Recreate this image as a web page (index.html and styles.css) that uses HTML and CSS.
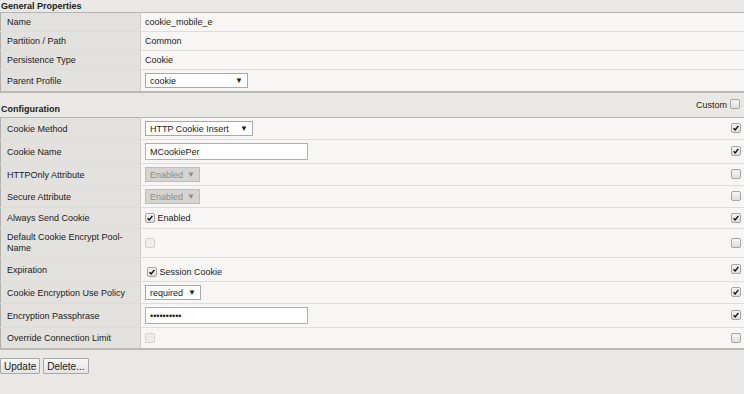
FILE: index.html
```html
<!DOCTYPE html>
<html>
<head>
<title>Cookie Persistence Profile</title>
<link rel="stylesheet" href="styles.css">
</head>
<body>
<div class="page">
  <h3 class="section">General Properties</h3>
  <table class="props">
    <tr>
      <td class="label">Name</td>
      <td class="value" colspan="2">cookie_mobile_e</td>
    </tr>
    <tr>
      <td class="label">Partition / Path</td>
      <td class="value" colspan="2">Common</td>
    </tr>
    <tr>
      <td class="label">Persistence Type</td>
      <td class="value" colspan="2">Cookie</td>
    </tr>
    <tr>
      <td class="label">Parent Profile</td>
      <td class="value" colspan="2"><span class="select w-parent"><span>cookie</span><span class="arrow">&#9660;</span></span></td>
    </tr>
  </table>

  <div class="config-head">
    <h3 class="section">Configuration</h3>
    <label class="custom-all">Custom <span class="cb"></span></label>
  </div>
  <table class="props">
    <tr>
      <td class="label">Cookie Method</td>
      <td class="value"><span class="select w-method"><span>HTTP Cookie Insert</span><span class="arrow">&#9660;</span></span></td>
      <td class="custom"><span class="cb on"><svg viewBox="0 0 10 10"><path d="M2 5.2 L4 7.4 L8 2.4"/></svg></span></td>
    </tr>
    <tr>
      <td class="label">Cookie Name</td>
      <td class="value"><input class="text" type="text" value="MCookiePer"></td>
      <td class="custom"><span class="cb on"><svg viewBox="0 0 10 10"><path d="M2 5.2 L4 7.4 L8 2.4"/></svg></span></td>
    </tr>
    <tr>
      <td class="label">HTTPOnly Attribute</td>
      <td class="value"><span class="select disabled w-small"><span>Enabled</span><span class="arrow">&#9660;</span></span></td>
      <td class="custom"><span class="cb"></span></td>
    </tr>
    <tr>
      <td class="label">Secure Attribute</td>
      <td class="value"><span class="select disabled w-small"><span>Enabled</span><span class="arrow">&#9660;</span></span></td>
      <td class="custom"><span class="cb"></span></td>
    </tr>
    <tr>
      <td class="label">Always Send Cookie</td>
      <td class="value check"><span class="cb on"><svg viewBox="0 0 10 10"><path d="M2 5.2 L4 7.4 L8 2.4"/></svg></span> Enabled</td>
      <td class="custom"><span class="cb on"><svg viewBox="0 0 10 10"><path d="M2 5.2 L4 7.4 L8 2.4"/></svg></span></td>
    </tr>
    <tr>
      <td class="label two">Default Cookie Encrypt Pool-Name</td>
      <td class="value"><span class="cb off"></span></td>
      <td class="custom"><span class="cb"></span></td>
    </tr>
    <tr>
      <td class="label">Expiration</td>
      <td class="value expire"><span class="cb on"><svg viewBox="0 0 10 10"><path d="M2 5.2 L4 7.4 L8 2.4"/></svg></span> Session Cookie</td>
      <td class="custom"><span class="cb on"><svg viewBox="0 0 10 10"><path d="M2 5.2 L4 7.4 L8 2.4"/></svg></span></td>
    </tr>
    <tr>
      <td class="label">Cookie Encryption Use Policy</td>
      <td class="value"><span class="select w-policy"><span>required</span><span class="arrow">&#9660;</span></span></td>
      <td class="custom"><span class="cb on"><svg viewBox="0 0 10 10"><path d="M2 5.2 L4 7.4 L8 2.4"/></svg></span></td>
    </tr>
    <tr>
      <td class="label">Encryption Passphrase</td>
      <td class="value"><input class="text" type="password" value="secretpass"></td>
      <td class="custom"><span class="cb on"><svg viewBox="0 0 10 10"><path d="M2 5.2 L4 7.4 L8 2.4"/></svg></span></td>
    </tr>
    <tr>
      <td class="label">Override Connection Limit</td>
      <td class="value check"><span class="cb off"></span></td>
      <td class="custom"><span class="cb"></span></td>
    </tr>
  </table>

  <div class="actions">
    <button type="button">Update</button>
    <button type="button">Delete...</button>
  </div>
</div>
</body>
</html>
```

FILE: styles.css
```css
* {
  box-sizing: border-box;
}
body {
  margin: 0;
  background-color: #fff;
  font-family: "Liberation Sans", Arial, sans-serif;
  font-size: 9px;
  color: #1a1a1a;
}
.page {
  width: 744px;
  min-height: 394px;
  background-color: #e9e8e4;
}
.section {
  margin: 0;
  padding-left: 1px;
  font-size: 9px;
  font-weight: bold;
  line-height: 13px;
  height: 12px;
}
.config-head {
  display: flex;
  justify-content: space-between;
  height: 24px;
}
.config-head .section {
  align-self: flex-end;
  margin-bottom: 2px;
}
.custom-all {
  display: flex;
  align-items: center;
  gap: 3px;
  margin-top: 6px;
  margin-right: 4px;
  height: 12px;
  align-self: flex-start;
}
.props {
  width: 100%;
  border-collapse: collapse;
  border-top: 1px solid #b3b3b1;
  border-bottom: 2px solid #bab9b6;
  border-left: 1px solid #b0afac;
}
.props td {
  padding: 3px 4px;
  line-height: 12px;
  border-bottom: 1px solid #dddcd8;
  vertical-align: middle;
}
.props tr:last-child td {
  border-bottom: none;
}
.props td.label {
  width: 140px;
  padding-left: 6px;
  background-color: #e2e1dd;
  border-right: 1px solid #cfcecb;
}
.props td.label.two {
  line-height: 11px;
}
.props td.value {
  background-color: #f7f6f4;
}
.props td.value.check {
  line-height: 14px;
}
.props td.value.expire {
  padding-top: 8px;
  padding-left: 6px;
}
.props td.custom {
  width: 20px;
  text-align: right;
  padding-right: 3px;
  background-color: #f7f6f4;
}
.select {
  display: inline-flex;
  align-items: center;
  justify-content: space-between;
  height: 15px;
  padding: 0 4px;
  border: 1px solid #a9a9a9;
  background-color: #fff;
  vertical-align: middle;
}
.select .arrow {
  font-size: 8px;
  color: #222;
}
.select.disabled {
  background-color: #d5d4d0;
  border-color: #bdbcb8;
  color: #8d8c89;
}
.select.disabled .arrow {
  color: #8d8c89;
}
.w-parent {
  width: 103px;
}
.w-method {
  width: 108px;
}
.w-small {
  width: 55px;
}
.w-policy {
  width: 56px;
}
.text {
  display: block;
  width: 163px;
  height: 17px;
  margin: 0;
  padding: 0 4px;
  border: 1px solid #b0b0b0;
  background-color: #fff;
  font-family: "Liberation Sans", Arial, sans-serif;
  font-size: 9px;
  color: #1a1a1a;
}
.cb {
  display: inline-block;
  width: 10px;
  height: 10px;
  border: 1px solid #a5a5a5;
  border-radius: 2px;
  background: linear-gradient(#f6f6f6, #dedede);
  vertical-align: middle;
  position: relative;
  top: -1px;
}
.cb svg {
  display: block;
  width: 8px;
  height: 8px;
}
.cb svg path {
  fill: none;
  stroke: #111;
  stroke-width: 1.8;
}
.cb.off {
  border-color: #d2d1ce;
  background: #eeedea;
}
.actions {
  padding-top: 8px;
  display: flex;
  gap: 3px;
}
.actions button {
  height: 16px;
  padding: 0 3px;
  border: 1px solid #a8a8a8;
  border-radius: 1px;
  background: linear-gradient(#f7f7f7, #e3e3e3);
  font-family: "Liberation Sans", Arial, sans-serif;
  font-size: 10px;
  color: #1a1a1a;
}
```
